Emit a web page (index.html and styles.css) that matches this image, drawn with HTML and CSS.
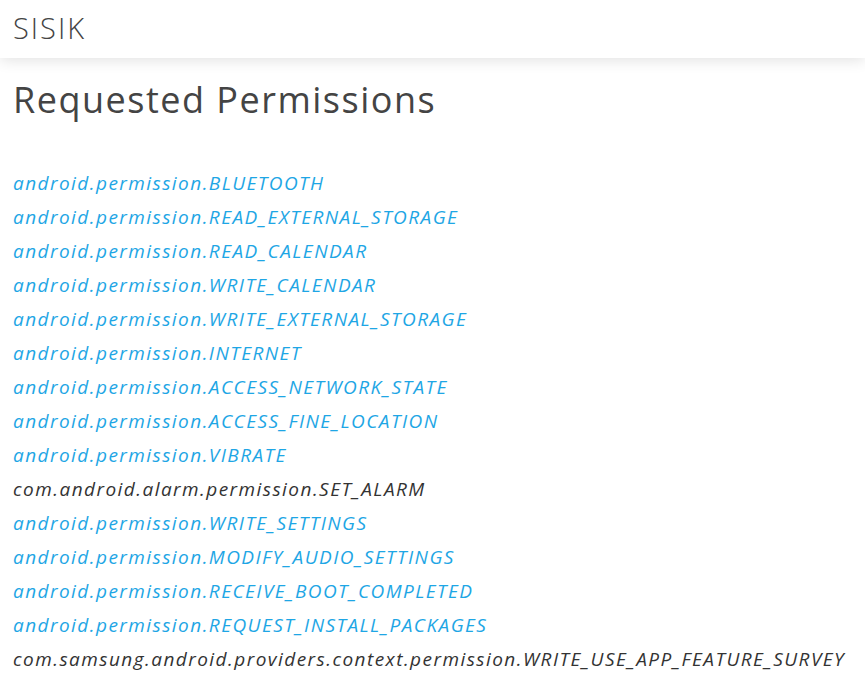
FILE: index.html
```html
<!DOCTYPE html>
<html>
<head>
<meta charset="utf-8">
<link rel="stylesheet" href="styles.css">
</head>
<body>
<header class="topbar"><span class="brand">SISIK</span></header>
<main class="content">
<h1 class="title">Requested Permissions</h1>
<ul class="perms">
<li class="perm link">android.permission.BLUETOOTH</li>
<li class="perm link">android.permission.READ_EXTERNAL_STORAGE</li>
<li class="perm link">android.permission.READ_CALENDAR</li>
<li class="perm link">android.permission.WRITE_CALENDAR</li>
<li class="perm link">android.permission.WRITE_EXTERNAL_STORAGE</li>
<li class="perm link">android.permission.INTERNET</li>
<li class="perm link">android.permission.ACCESS_NETWORK_STATE</li>
<li class="perm link">android.permission.ACCESS_FINE_LOCATION</li>
<li class="perm link">android.permission.VIBRATE</li>
<li class="perm">com.android.alarm.permission.SET_ALARM</li>
<li class="perm link">android.permission.WRITE_SETTINGS</li>
<li class="perm link">android.permission.MODIFY_AUDIO_SETTINGS</li>
<li class="perm link">android.permission.RECEIVE_BOOT_COMPLETED</li>
<li class="perm link">android.permission.REQUEST_INSTALL_PACKAGES</li>
<li class="perm">com.samsung.android.providers.context.permission.WRITE_USE_APP_FEATURE_SURVEY</li>
</ul>
</main>
</body>
</html>
```
FILE: styles.css
```css
html, body { margin: 0; padding: 0; background: #fff; }
body { font-family: "Open Sans", "DejaVu Sans", sans-serif; color: #333; overflow: hidden; }
.topbar {
  height: 58px;
  display: flex;
  align-items: center;
  padding: 0 13px;
  background: #fff;
  box-shadow: 0 2px 14px rgba(0,0,0,0.12);
  position: relative;
}
.brand { font-size: 29px; color: #444; font-weight: 300; letter-spacing: 2px; margin-top: -3px; }
.content { padding: 0 13px; }
.title { margin: 20px 0 0; font-size: 36px; font-weight: 400; color: #444; line-height: 44px; letter-spacing: 1.5px; }
.perms { list-style: none; margin: 44px 0 0; padding: 0; }
.perm { font-style: italic; font-size: 19px; line-height: 34px; color: #333; white-space: nowrap; letter-spacing: 1.45px; }
.perm.link { color: #1ea6e5; }
```
